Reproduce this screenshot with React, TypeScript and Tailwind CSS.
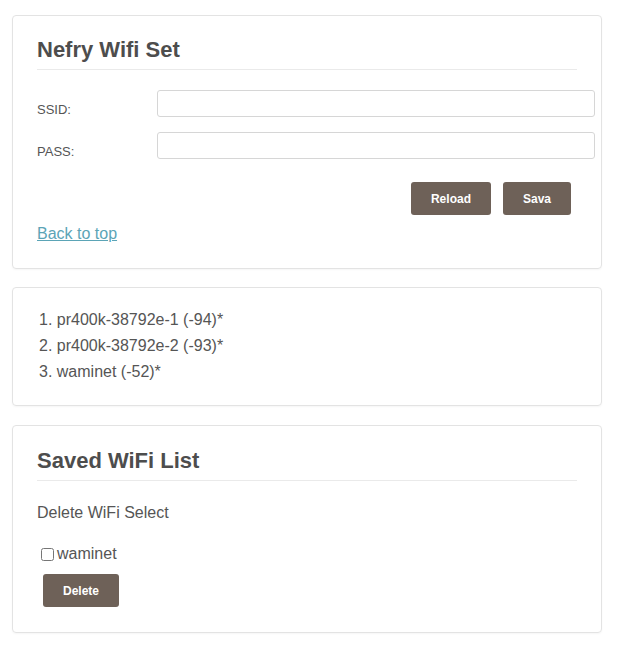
import React from 'react'

const networks = ['pr400k-38792e-1 (-94)*', 'pr400k-38792e-2 (-93)*', 'waminet (-52)*']

function Btn({ label, className = '' }: { label: string; className?: string }) {
  return (
    <button
      type="button"
      className={`h-[33px] px-[20px] rounded-[3px] bg-[#6e6158] text-white text-[12px] font-bold leading-none ${className}`}
    >
      {label}
    </button>
  )
}

export default function App() {
  return (
    <div className="min-h-[650px] bg-white pt-[15px] pb-[16px] font-['Liberation_Sans',Arial,sans-serif] text-[#555]">

      {/* wifi set */}
      <div className="ml-[12px] w-[590px] border border-[#e3e3e3] rounded-[4px] shadow-[0_1px_2px_rgba(0,0,0,0.04)] px-[24px] pt-[21px] pb-[22px]">
        <h2 className="text-[22px] leading-[26px] font-bold text-[#4d4d4d] pb-[6px] border-b border-[#eaeaea]">
          Nefry Wifi Set
        </h2>
        <div className="mt-[20px] -mr-[18px] flex flex-col gap-[15px]">
          {['SSID:', 'PASS:'].map((l) => (
            <div key={l} className="flex">
              <label className="w-[120px] shrink-0 pt-[13px] text-[13px] leading-[14px] text-[#555]">{l}</label>
              <input
                type={l === 'PASS:' ? 'password' : 'text'}
                className="flex-1 h-[27px] border border-[#d6d6d6] rounded-[3px] px-2 text-[13px] outline-none"
              />
            </div>
          ))}
        </div>
        <div className="mt-[23px] mr-[6px] flex justify-end gap-[12px]">
          <Btn label="Reload" />
          <Btn label="Sava" />
        </div>
        <a href="#" className="mt-[7px] block w-fit text-[16px] leading-[24px] text-[#5ba4b6] underline">
          Back to top
        </a>
      </div>

      {/* scan result */}
      <div className="mt-[18px] ml-[12px] w-[590px] border border-[#e3e3e3] rounded-[4px] shadow-[0_1px_2px_rgba(0,0,0,0.04)] px-[24px] pt-[19px] pb-[20px]">
        <ol className="list-decimal list-inside pl-[2px] text-[16px] leading-[26px] text-[#555]">
          {networks.map((n) => (
            <li key={n}>{n}</li>
          ))}
        </ol>
      </div>

      {/* saved list */}
      <div className="mt-[19px] ml-[12px] w-[590px] border border-[#e3e3e3] rounded-[4px] shadow-[0_1px_2px_rgba(0,0,0,0.04)] px-[24px] pt-[22px] pb-[25px]">
        <h2 className="text-[22px] leading-[26px] font-bold text-[#4d4d4d] pb-[6px] border-b border-[#eaeaea]">
          Saved WiFi List
        </h2>
        <p className="mt-[20px] text-[16px] leading-[24px]">Delete WiFi Select</p>
        <label className="mt-[17px] flex items-center text-[16px] leading-[24px]">
          <input type="checkbox" className="m-0 ml-[4px] mr-[3px] w-[13px] h-[13px] accent-[#888]" />
          waminet
        </label>
        <Btn label="Delete" className="mt-[8px] ml-[6px] block" />
      </div>
    </div>
  )
}
